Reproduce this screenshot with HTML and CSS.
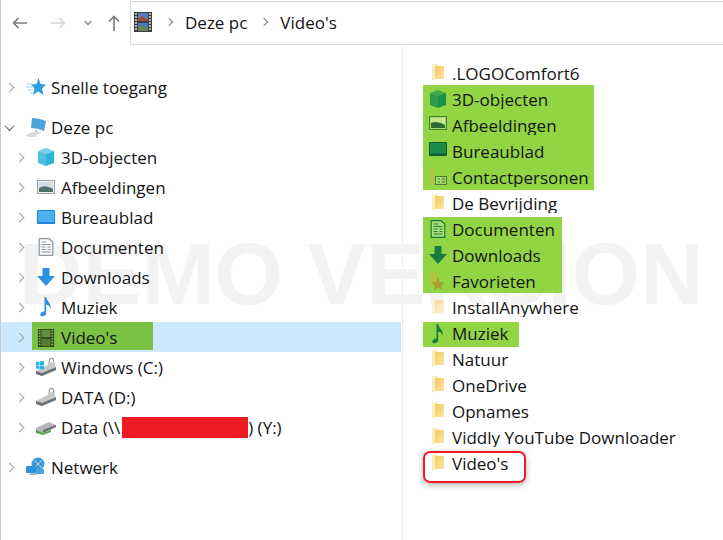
FILE: index.html
```html
<!DOCTYPE html>
<html lang="en">
<head>
    <meta charset="UTF-8">
    <meta name="viewport" content="width=device-width, initial-scale=1.0">
    <title>Video's</title>
    <link rel="stylesheet" href="styles.css">
</head>
<body>
    <svg class="defs" width="0" height="0">
        <defs>
            <linearGradient id="folder-fill" x1="0" y1="0" x2="1" y2="1">
                <stop offset="0" stop-color="#f2ca62"/>
                <stop offset="1" stop-color="#fce6a0"/>
            </linearGradient>
        </defs>
        <symbol id="folder" viewBox="0 0 12 17">
            <path d="M0 1 Q0 0 1 0 H5 L6 2 H12 V15 H3 L0 17 Z" fill="#fbeebb"/>
            <path d="M3 2 H12 V15 H3 Z" fill="url(#folder-fill)"/>
        </symbol>
        <symbol id="film" viewBox="0 0 18 20">
            <rect x="0" y="0" width="18" height="20" fill="#3c4038"/>
            <rect x="4" y="1" width="10" height="8" fill="#5b7fb5"/>
            <path d="M4 7 L8 4 L14 8 V9 H4 Z" fill="#a04a3a"/>
            <rect x="4" y="11" width="10" height="8" fill="#4a76c8"/>
            <path d="M4 16 L9 13 L14 17 V19 H4 Z" fill="#5f8a4a"/>
            <path d="M1 2 H3 M1 5 H3 M1 8 H3 M1 11 H3 M1 14 H3 M1 17 H3 M15 2 H17 M15 5 H17 M15 8 H17 M15 11 H17 M15 14 H17 M15 17 H17" stroke="#d8d8d8" stroke-width="1.4"/>
        </symbol>
        <symbol id="cube" viewBox="0 0 18 18">
            <path d="M9 0 L17 3 L9 6 L1 3 Z" fill="currentColor" opacity=".65"/>
            <path d="M1 3 L9 6 V18 L1 15 Z" fill="currentColor" opacity=".85"/>
            <path d="M17 3 L9 6 V18 L17 15 Z" fill="currentColor"/>
        </symbol>
        <symbol id="doc" viewBox="0 0 15 18">
            <path d="M.7.7 H10.500 L14.300 4 V17.300 H.7 Z" fill="#fff" fill-opacity=".25" stroke="currentColor" stroke-width="1.200"/>
            <path d="M3 4 H8 M3 6.500 H12 M3 9 H7 M9 9 H12 M3 11.500 H7 M9 11.500 H12 M3 14 H12" stroke="currentColor" stroke-width="1.200"/>
        </symbol>
        <symbol id="down" viewBox="0 0 18 18">
            <path d="M5.500 0 H12.500 V8 H18 L9 18 L0 8 H5.500 Z" fill="currentColor"/>
        </symbol>
        <symbol id="note" viewBox="0 0 12 20">
            <path d="M4.500 0 H6.200 C6.500 4 11.500 6 11 12 C10 9 8 8 6.200 7.500 V16.500 C6.200 19 1 20.500 .3 18 C-.2 15.800 2.800 14 4.500 14.500 Z" fill="currentColor"/>
        </symbol>
        <symbol id="drive" viewBox="0 0 22 16">
            <path d="M1 10 L15 3 L21 6 V9 L7 15 L1 13 Z" fill="#c4c6c8"/>
            <path d="M1 10 L7 12 L21 6 V9 L7 15 L1 13 Z" fill="#6d7073"/>
        </symbol>
        <symbol id="lock" viewBox="0 0 10 14">
            <path d="M2.500 6 V4 A2.500 2.500 0 0 1 7.500 4 V6" fill="none" stroke="#9a9da0" stroke-width="1.400"/>
            <rect x="1" y="6" width="8" height="7" fill="#c6c8ca"/>
        </symbol>
    </svg>

    <div class="toolbar">
        <div class="nav-buttons">
            <svg class="back" width="16" height="12" viewBox="0 0 16 12"><path d="M15 6 H2 M6.500 1 L1.500 6 L6.500 11" fill="none" stroke="#7b7b7b" stroke-width="1.600"/></svg>
            <svg class="forward" width="16" height="12" viewBox="0 0 16 12"><path d="M1 6 H14 M9.500 1 L14.500 6 L9.500 11" fill="none" stroke="#d5d5d5" stroke-width="1.600"/></svg>
            <svg class="recent" width="8" height="6" viewBox="0 0 8 6"><path d="M.7 1 L4 4.500 L7.300 1" fill="none" stroke="#8a8a8a" stroke-width="1.500"/></svg>
            <svg class="up" width="12" height="16" viewBox="0 0 12 16"><path d="M6 16 V2 M1 6.500 L6 1.500 L11 6.500" fill="none" stroke="#7b7b7b" stroke-width="1.600"/></svg>
        </div>
        <div class="address">
            <svg class="address-icon" width="18" height="20"><use href="#film"/></svg>
            <i class="crumb-sep"></i>
            <span>Deze pc</span>
            <i class="crumb-sep"></i>
            <span>Video's</span>
        </div>
    </div>

    <div class="main">
        <div class="tree">
            <div class="row root"><i class="chev"></i>
                <svg class="icon" width="20" height="18" viewBox="0 0 20 18"><path d="M12.500 0 L14.500 6 L20 6.500 L16 10.500 L17.500 17 L12 13.500 L7 17 L8.500 10.500 L5 6.500 L10.500 6 Z" fill="#2e9fdc"/><path d="M1 6 H6 M0 9 H6 M2 12 H7 M4 15 H8" stroke="#8fcdee" stroke-width="1"/></svg>
                Snelle toegang</div>

            <div class="row root group"><i class="chev open"></i>
                <svg class="icon" width="20" height="20" viewBox="0 0 20 20"><path d="M6 1 Q13 1 20 4 L18 14 Q12 11 5 11 Z" fill="#4aa5dc"/><path d="M10 12 L12 15 H9 Z" fill="#b8bcc0"/><path d="M0 18 L7 15 H15 L9 20 H2 Z" fill="#d8dadc"/></svg>
                Deze pc</div>
            <div class="row"><i class="chev"></i>
                <svg class="icon cyan" width="18" height="18"><use href="#cube"/></svg>3D-objecten</div>
            <div class="row"><i class="chev"></i>
                <svg class="icon" width="18" height="14" viewBox="0 0 18 14"><rect x=".5" y=".5" width="17" height="13" fill="#eef1f3" stroke="#9aa0a4"/><rect x="2" y="2" width="14" height="10" fill="#cfdde6"/><path d="M2 8 Q8 4 16 9 V12 H2 Z" fill="#50706a"/></svg>
                Afbeeldingen</div>
            <div class="row"><i class="chev"></i>
                <svg class="icon" width="18" height="14" viewBox="0 0 18 14"><rect width="18" height="14" rx="1" fill="#1f86d8"/><rect x="1" y="1" width="16" height="11" fill="#4ab0ee"/></svg>
                Bureaublad</div>
            <div class="row"><i class="chev"></i>
                <svg class="icon doc-gray" width="15" height="18"><use href="#doc"/></svg>Documenten</div>
            <div class="row"><i class="chev"></i>
                <svg class="icon blue" width="18" height="18"><use href="#down"/></svg>Downloads</div>
            <div class="row"><i class="chev"></i>
                <svg class="icon blue" width="12" height="20"><use href="#note"/></svg>Muziek</div>
            <div class="row selected"><i class="chev"></i>
                <span class="marked">
                    <svg class="icon" width="16" height="18" viewBox="0 0 18 20"><rect width="18" height="20" fill="#2f4a1f"/><rect x="4" y="1" width="10" height="8" fill="#5f8f3a"/><rect x="4" y="11" width="10" height="8" fill="#4f7f30"/><path d="M1 2 H3 M1 5 H3 M1 8 H3 M1 11 H3 M1 14 H3 M1 17 H3 M15 2 H17 M15 5 H17 M15 8 H17 M15 11 H17 M15 14 H17 M15 17 H17" stroke="#8dc060" stroke-width="1.400"/></svg>
                    Video's
                </span></div>
            <div class="row"><i class="chev"></i>
                <svg class="icon" width="22" height="20" viewBox="0 0 22 20"><use href="#drive" width="22" height="16" y="4"/><use href="#lock" x="12" width="9" height="12"/><path d="M1 5 L4.500 4.500 V8 H1 Z M5 4.400 L9 4 V8 H5 Z M1 8.500 H4.500 V12 L1 11.500 Z M5 8.500 H9 V12.500 L5 12 Z" fill="#25b4e8"/></svg>
                Windows (C:)</div>
            <div class="row"><i class="chev"></i>
                <svg class="icon" width="22" height="20" viewBox="0 0 22 20"><use href="#drive" width="22" height="16" y="4"/><use href="#lock" x="12" width="9" height="12"/></svg>
                DATA (D:)</div>
            <div class="row"><i class="chev"></i>
                <svg class="icon" width="22" height="16" viewBox="0 0 22 16"><path d="M1 9 L14 3 L21 6 V8 L8 14 L1 12 Z" fill="#b4b7b9"/><path d="M8 11 L21 6 V8 L8 14 Z" fill="#6d7073"/><path d="M1 11 L8 14 L8 16 L1 14 Z M8 14 L16 11 V13 L8 16 Z" fill="#4ea84a"/></svg>
                <span class="path">Data (\\<span class="redacted"></span>) (Y:)</span></div>

            <div class="row root group"><i class="chev"></i>
                <svg class="icon" width="20" height="20" viewBox="0 0 20 20"><circle cx="12" cy="7" r="6.500" fill="#3f9ad6"/><path d="M8 3 L16 11 M16 3 L8 11" stroke="#a8d4ee"/><rect x="0" y="9" width="10" height="7" rx="1" fill="#2f8fd8"/><path d="M3 18 H12 L9 16 H5 Z" fill="#9fb6c4"/><rect x="10" y="12" width="8" height="5" fill="#4aa5dc"/></svg>
                Netwerk</div>
        </div>

        <div class="files">
            <div class="file"><svg class="folder" width="12" height="17"><use href="#folder"/></svg><span class="name">.LOGOComfort6</span></div>
            <div class="hilite first">
                <div class="file"><svg class="file-icon green" width="18" height="18"><use href="#cube"/></svg><span class="name cut">3D-objecten</span></div>
                <div class="file"><svg class="file-icon" width="18" height="14" viewBox="0 0 18 14"><rect x=".5" y=".5" width="17" height="13" fill="#a9d968" stroke="#3f8038"/><rect x="2" y="2" width="14" height="10" fill="#c4e68e"/><path d="M2 7 Q8 4 16 9 V12 H2 Z" fill="#2d6a35"/></svg><span class="name cut">Afbeeldingen</span></div>
                <div class="file"><svg class="file-icon" width="18" height="14" viewBox="0 0 18 14"><rect width="18" height="14" rx="1" fill="#0e5f36"/><rect x="1" y="1" width="16" height="10.500" fill="#1d8a4a"/></svg><span class="name">Bureaublad</span></div>
                <div class="file"><svg class="file-icon" width="20" height="18" viewBox="0 0 20 18"><path d="M2 0 H6 V16 L2 18 Z" fill="#b3c53e"/><rect x="7.500" y="8.500" width="11" height="8" fill="#a9d968" stroke="#3f8038"/><path d="M10 11 H12 M10 14 H12 M14 11 H17 M14 14 H17" stroke="#2f6f30"/></svg><span class="name cut">Contactpersonen</span></div>
            </div>
            <div class="file"><svg class="folder" width="12" height="17"><use href="#folder"/></svg><span class="name cut">De Bevrijding</span></div>
            <div class="hilite docs">
                <div class="file"><svg class="file-icon dark-green" width="15" height="18"><use href="#doc"/></svg><span class="name">Documenten</span></div>
                <div class="file"><svg class="file-icon dark-green" width="18" height="18"><use href="#down"/></svg><span class="name">Downloads</span></div>
                <div class="file"><svg class="file-icon" width="18" height="18" viewBox="0 0 18 18"><path d="M1 0 H6 L9 3 V14 H1 Z" fill="#b3c53e"/><path d="M9 5 L11 10 L16 10.500 L12.500 13.500 L13.500 18 L9 15.500 L5 18 L6 13.500 L2 10.500 L7 10 Z" fill="#a8a034"/></svg><span class="name">Favorieten</span></div>
            </div>
            <div class="file"><svg class="folder faded" width="12" height="17"><use href="#folder"/></svg><span class="name cut">InstallAnywhere</span></div>
            <div class="hilite music">
                <div class="file"><svg class="file-icon dark-green" width="12" height="20"><use href="#note"/></svg><span class="name">Muziek</span></div>
            </div>
            <div class="file"><svg class="folder" width="12" height="17"><use href="#folder"/></svg><span class="name">Natuur</span></div>
            <div class="file"><svg class="folder" width="12" height="17"><use href="#folder"/></svg><span class="name">OneDrive</span></div>
            <div class="file"><svg class="folder" width="12" height="17"><use href="#folder"/></svg><span class="name">Opnames</span></div>
            <div class="file"><svg class="folder" width="12" height="17"><use href="#folder"/></svg><span class="name cut">Viddly YouTube Downloader</span></div>
            <div class="file circled"><svg class="folder" width="12" height="17"><use href="#folder"/></svg><span class="name">Video's</span></div>
        </div>

        <div class="watermark">DEMO VERSION</div>
    </div>
</body>
</html>
```

FILE: styles.css
```css
*, *::after { box-sizing: border-box; }
html, body { height: 100%; }
body { margin: 0; background: #fff; color: #141414; font-family: "Open Sans", "Noto Sans", sans-serif; font-size: 17px; overflow: hidden; border-left: 1px solid #c8c8c8; display: flex; flex-direction: column; }
.defs { position: absolute; }

.toolbar { height: 45px; flex: none; display: flex; padding-top: 1px; }
.nav-buttons { width: 129px; flex: none; display: flex; align-items: center; padding-left: 11px; }
.back { margin-right: 22px; }
.forward { margin-right: 18px; }
.recent { margin-right: 16px; }
.address { flex: 1; border: 1px solid #d9d9d9; border-right: 0; display: flex; align-items: center; padding: 0 0 2px 3px; }
.address-icon { margin-right: 14px; }
.crumb-sep { width: 6px; height: 6px; border-top: 1.500px solid #7d7d7d; border-right: 1.500px solid #7d7d7d; transform: rotate(45deg); margin-right: 13px; }
.address span { margin-right: 14px; }

.main { flex: 1; display: flex; position: relative; min-height: 0; }

.tree { width: 402px; flex: none; padding-top: 27px; border-right: 1px solid #eee; margin-right: 1px; }
.row { height: 30px; display: flex; align-items: center; padding-left: 16px; position: relative; z-index: 1; white-space: nowrap; }
.row.root { padding-left: 6px; }
.group { margin-top: 10px; }
.chev { width: 7px; height: 7px; border-top: 1.500px solid #a0a0a0; border-right: 1.500px solid #a0a0a0; transform: rotate(45deg); flex: none; margin-right: 14px; margin-left: -1px; }
.chev.open { border-color: #555; transform: rotate(135deg) translate(-1px, 1px); }
.icon { width: 22px; flex: none; margin: 0 4px 0 -2px; }
.cyan { color: #2fb4d6; }
.doc-gray { color: #8a97a3; }
.blue { color: #2f8fe0; }
.selected { background: #cce8ff; margin-right: 1px; }
.marked { background: #7cc242; display: flex; align-items: center; width: 121px; height: 28px; align-self: flex-start; margin-left: -5px; padding: 3px 0 0 5px; }
.redacted { display: inline-block; width: 126px; height: 21px; background: #ed1c24; vertical-align: -4px; margin-left: 2px; }

.files { flex: 1; padding: 15px 0 0 19px; position: relative; z-index: 1; }
.file { height: 26px; display: flex; align-items: flex-start; white-space: nowrap; position: relative; }
.name { line-height: 28px; }
.name.cut { height: 23px; overflow: hidden; }
.folder { flex: none; margin: 4px 8px 0 9px; }
.faded { opacity: .55; }
.file-icon { width: 22px; flex: none; margin: 4px 3px 0 4px; }
.hilite { background: #92d544; display: flow-root; }
.hilite.first { width: 171px; margin-top: -1px; padding-top: 1px; }
.hilite.docs { width: 139px; height: 76px; margin: 1px 0; }
.hilite.docs .file:first-child { margin-top: -1px; }
.hilite.music { width: 96px; height: 25px; margin: 2px 0 -1px; }
.hilite.music .file { margin-top: -2px; }
.green { color: #17924a; }
.dark-green { color: #1a7a40; }
.circled { width: 103px; }
.circled::after { content: ""; position: absolute; left: 0; top: 1px; width: 103px; height: 32px; border: 2px solid #ed1c24; border-radius: 7px; box-shadow: 0 2px 6px rgba(0, 0, 0, .3); }

.watermark { position: absolute; left: 18px; top: 178px; font-family: "Liberation Sans", sans-serif; font-weight: bold; font-size: 88px; color: #f3f3f3; white-space: nowrap; }
```
